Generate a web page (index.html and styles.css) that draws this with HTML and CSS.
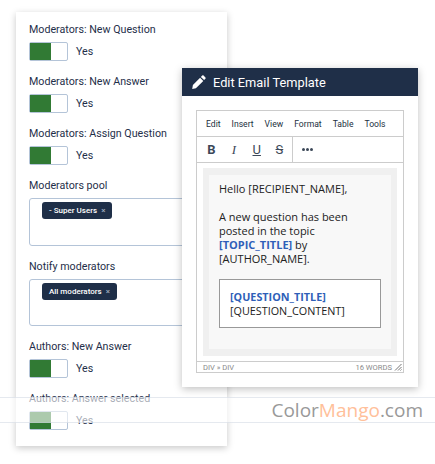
FILE: index.html
```html
<!DOCTYPE html>
<html lang="en">
<head>
  <meta charset="UTF-8" />
  <title>Edit Email Template</title>
  <link rel="stylesheet" href="styles.css">
</head>
<body>

  <!-- Settings panel -->
  <div class="panel">
    <div class="field">
      <label>Moderators: New Question</label>
      <div class="switch-row"><span class="switch"><span class="switch-on"></span></span><span>Yes</span></div>
    </div>
    <div class="field">
      <label>Moderators: New Answer</label>
      <div class="switch-row"><span class="switch"><span class="switch-on"></span></span><span>Yes</span></div>
    </div>
    <div class="field">
      <label>Moderators: Assign Question</label>
      <div class="switch-row"><span class="switch"><span class="switch-on"></span></span><span>Yes</span></div>
    </div>
    <div class="field">
      <label>Moderators pool</label>
      <div class="tag-box"><span class="tag">- Super Users <i>×</i></span></div>
    </div>
    <div class="field">
      <label>Notify moderators</label>
      <div class="tag-box tag-box-short"><span class="tag">All moderators <i>×</i></span></div>
    </div>
    <div class="field">
      <label>Authors: New Answer</label>
      <div class="switch-row"><span class="switch"><span class="switch-on"></span></span><span>Yes</span></div>
    </div>
    <div class="field">
      <label>Authors: Answer selected</label>
      <div class="switch-row"><span class="switch"><span class="switch-on"></span></span><span>Yes</span></div>
    </div>
  </div>

  <!-- Email template dialog -->
  <div class="dialog">
    <div class="dialog-head">
      <svg class="pencil" width="14" height="14" viewBox="0 0 14 14"><path fill="#fff" d="M10.2.6a1 1 0 0 1 1.4 0l1.8 1.8a1 1 0 0 1 0 1.4l-1.3 1.3-3.2-3.2zM8.100 2.700l3.200 3.200-7.400 7.400-3.700.7.700-3.900z"/></svg>
      <span>Edit Email Template</span>
    </div>
    <div class="editor">
      <div class="menubar">
        <span>Edit</span><span>Insert</span><span>View</span><span>Format</span><span>Table</span><span>Tools</span>
      </div>
      <div class="toolbar">
        <div class="tool-group">
          <b class="tool">B</b><i class="tool tool-i">I</i><u class="tool">U</u><s class="tool">S</s>
        </div>
        <div class="tool-more"><span></span><span></span><span></span></div>
      </div>
      <div class="content">
        <div class="mail">
          <p>Hello [RECIPIENT_NAME],</p>
          <p class="mail-last">A new question has been posted in the topic <strong>[TOPIC_TITLE]</strong> by [AUTHOR_NAME].</p>
          <div class="quote"><strong>[QUESTION_TITLE]</strong><br>[QUESTION_CONTENT]</div>
        </div>
      </div>
      <div class="statusbar">
        <span>DIV » DIV</span>
        <span class="words">16 WORDS</span>
        <svg class="grip" width="8" height="8" viewBox="0 0 8 8"><path stroke="#777" fill="none" d="M7.500 1L1 7.500M7.500 4L4 7.500M7.500 6.500L6.500 7.500"/></svg>
      </div>
    </div>
  </div>

  <!-- Watermark band -->
  <div class="watermark">
    <span class="mark">Color<span class="mark-orange">Mango</span>.com</span>
  </div>

</body>
</html>
```

FILE: styles.css
```css
html, body {
  margin: 0;
  padding: 0;
}

body {
  width: 435px;
  height: 464px;
  overflow: hidden;
  background-color: #fff;
  font-family: 'Roboto', sans-serif;
  color: #1f2f4a;
  font-size: 10.7px;
}

.panel {
  box-sizing: border-box;
  width: 211px;
  height: 434px;
  margin: 12px 0 0 16px;
  padding: 11px 13px 0;
  background-color: #fff;
  box-shadow: 0 2px 7px rgba(0, 0, 0, 0.22);
}

.field {
  margin-bottom: 14px;
}

.field label {
  display: block;
  height: 14px;
  line-height: 14px;
  margin-bottom: 5px;
}

.switch-row {
  display: flex;
  align-items: center;
  gap: 8px;
  height: 19px;
}

.switch {
  box-sizing: border-box;
  display: block;
  width: 39px;
  height: 19px;
  border: 1px solid #b4c4d8;
  border-radius: 2px;
  background-color: #fff;
}

.switch-on {
  display: block;
  width: 21px;
  height: 17px;
  background-color: #317a34;
}

.tag-box {
  box-sizing: border-box;
  width: 172px;
  height: 48px;
  padding: 3px 12px;
  border: 1px solid #b4c4d8;
  border-radius: 3px;
  background-color: #fff;
}

.tag-box-short {
  height: 47px;
}

.tag {
  display: inline-block;
  height: 17px;
  line-height: 17px;
  padding: 0 7px;
  border-radius: 3px;
  background-color: #1f2f48;
  color: #fff;
  font-size: 8px;
  font-weight: 500;
}

.tag i {
  font-style: normal;
  color: #9aa6b8;
  margin-left: 2px;
}

.dialog {
  position: absolute;
  left: 182px;
  top: 68px;
  width: 236px;
  height: 319px;
  background-color: #fff;
  box-shadow: 0 2px 8px rgba(0, 0, 0, 0.25);
}

.dialog-head {
  display: flex;
  align-items: center;
  gap: 7px;
  height: 28px;
  padding-left: 10px;
  background-color: #1f2f48;
  color: #fff;
  font-size: 12.8px;
}

.editor {
  box-sizing: border-box;
  width: 208px;
  height: 263px;
  margin: 14px 0 0 14px;
  border: 1px solid #ccc;
}

.menubar {
  display: flex;
  gap: 11px;
  height: 25px;
  padding-left: 9px;
  align-items: center;
  border-bottom: 1px solid #ccc;
  font-size: 8.6px;
  color: #222f3e;
}

.toolbar {
  display: flex;
  height: 25px;
  border-bottom: 1px solid #ccc;
}

.tool-group {
  display: flex;
  align-items: center;
  width: 96px;
  padding-left: 3px;
  box-sizing: border-box;
  border-right: 1px solid #ccc;
  color: #3c4858;
  font-size: 13px;
}

.tool {
  width: 22.7px;
  text-align: center;
}

.tool-i {
  font-family: 'Liberation Serif', serif;
}

.tool-more {
  display: flex;
  align-items: center;
  gap: 1px;
  padding-left: 9px;
}

.tool-more span {
  width: 3px;
  height: 3px;
  border-radius: 50%;
  background-color: #3c4858;
}

.content {
  box-sizing: border-box;
  height: 198px;
  padding: 5px 6px;
}

.mail {
  box-sizing: border-box;
  height: 188px;
  border: solid #f0f0f0;
  border-width: 7px 6px;
  padding: 7px 10px;
  background-color: #f8f8f8;
  font-family: 'Open Sans', sans-serif;
  font-size: 11px;
  line-height: 14px;
  color: #222;
}

.mail p {
  margin: 0 0 14px;
}

.mail .mail-last {
  margin-bottom: 13px;
}

.mail strong {
  color: #2f5fb8;
}

.quote {
  box-sizing: border-box;
  width: 162px;
  height: 49px;
  padding: 10px;
  border: 1px solid #999;
  background-color: #fff;
  font-size: 10.8px;
}

.statusbar {
  display: flex;
  align-items: center;
  height: 10px;
  padding: 0 1px 0 6px;
  border-top: 1px solid #ccc;
  font-size: 7.6px;
  color: #8a8a8a;
}

.words {
  margin-left: auto;
}

.grip {
  margin-left: 2px;
}

.watermark {
  position: absolute;
  left: 0;
  top: 397px;
  box-sizing: border-box;
  width: 435px;
  height: 26px;
  padding-right: 12px;
  text-align: right;
  background-color: rgba(255, 255, 255, 0.6);
  border-top: 1px solid rgba(190, 200, 215, 0.4);
  border-bottom: 1px solid rgba(190, 200, 215, 0.4);
}

.mark {
  font-family: 'Open Sans', sans-serif;
  font-size: 19px;
  line-height: 24px;
  color: #999;
}

.mark-orange {
  color: #ffc09a;
}
```
